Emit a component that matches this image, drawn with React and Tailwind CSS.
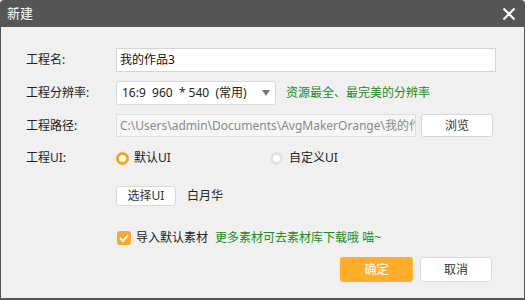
import React from "react";

const F = { fontFamily: '"Noto Sans", "Noto Sans CJK SC", sans-serif' };

export default function App() {
  return (
    <div className="w-[525px] h-[300px] bg-[#555555] rounded-t-[4px] flex flex-col overflow-hidden" style={F}>
      <div className="h-[27px] flex items-center justify-between pl-[7px] pr-[6px] text-white text-[13px] shrink-0">
        <span>新建</span>
        <svg width="18" height="18" viewBox="0 0 18 18" className="mr-[1px]">
          <path d="M3.5 3.5 L14.5 14.5 M14.5 3.5 L3.5 14.5" stroke="white" strokeWidth="2.2" />
        </svg>
      </div>
      <div className="flex-1 bg-[#f0f0f0] mx-[1px] mb-[2px] pl-[25px] pt-[21px] text-[12px] text-[#222]">
        {/* row 1 */}
        <div className="flex items-center h-[24px]">
          <div className="w-[90px]">工程名:</div>
          <div className="w-[380px] h-[24px] bg-white border border-[#d4d4d4] flex items-center pl-[3px] text-[#111]">我的作品3</div>
        </div>
        {/* row 2 */}
        <div className="flex items-center h-[24px] mt-[9px]">
          <div className="w-[90px]">工程分辨率:</div>
          <div className="w-[160px] h-[24px] bg-white border border-[#d9d9d9] rounded-[3px] flex items-center justify-between pl-[5px] pr-[5px]">
            <span className="whitespace-pre text-[#222]">16:9  960  * 540  (常用)</span>
            <svg width="8" height="6" viewBox="0 0 8 6"><path d="M0 0 H8 L4 6 Z" fill="#777" /></svg>
          </div>
          <div className="ml-[10px] text-[#1a8c1a]">资源最全、最完美的分辨率</div>
        </div>
        {/* row 3 */}
        <div className="flex items-center h-[23px] mt-[9px]">
          <div className="w-[90px]">工程路径:</div>
          <div className="w-[300px] h-[23px] bg-[#f6f6f6] border border-[#dedede] flex items-center pl-[3px] text-[#8a8a8a] overflow-hidden whitespace-nowrap">C:\Users\admin\Documents\AvgMakerOrange\我的作品3</div>
          <button className="ml-[5px] w-[72px] h-[23px] bg-white border border-[#d6d6d6] rounded-[3px] text-[#333]">浏览</button>
        </div>
        {/* row 4 */}
        <div className="flex items-center h-[24px] mt-[9px]">
          <div className="w-[90px]">工程UI:</div>
          <div className="w-[154px] flex items-center">
            <span className="w-[13px] h-[13px] rounded-full border-[3px] border-[#f7a51f] bg-white"></span>
            <span className="ml-[5px]">默认UI</span>
          </div>
          <div className="flex items-center">
            <span className="w-[13px] h-[13px] rounded-full border-[3px] border-[#e2e2e2] bg-white"></span>
            <span className="ml-[6px]">自定义UI</span>
          </div>
        </div>
        {/* row 5 */}
        <div className="flex items-center h-[20px] mt-[16px] pl-[90px]">
          <button className="w-[60px] h-[20px] bg-white border border-[#d9d9d9] rounded-[3px] text-[#333]">选择UI</button>
          <span className="ml-[11px]">白月华</span>
        </div>
        {/* row 6 */}
        <div className="flex items-center h-[16px] mt-[24px] pl-[91px]">
          <span className="w-[14px] h-[14px] rounded-[3px] bg-[#f7a830] flex items-center justify-center">
            <svg width="10" height="8" viewBox="0 0 10 8"><path d="M1 4 L4 7 L9 1" stroke="white" strokeWidth="1.8" fill="none" /></svg>
          </span>
          <span className="ml-[5px]">导入默认素材</span>
          <span className="ml-[7px] text-[#1a8c1a]">更多素材可去素材库下载哦 喵~</span>
        </div>
        {/* buttons */}
        <div className="flex justify-end mt-[11px] pr-[32px]">
          <button className="w-[73px] h-[25px] bg-[#ffae2c] rounded-[3px] text-white">确定</button>
          <button className="ml-[7px] w-[72px] h-[25px] bg-white border border-[#dcdcdc] rounded-[3px] text-[#333]">取消</button>
        </div>
      </div>
    </div>
  );
}
